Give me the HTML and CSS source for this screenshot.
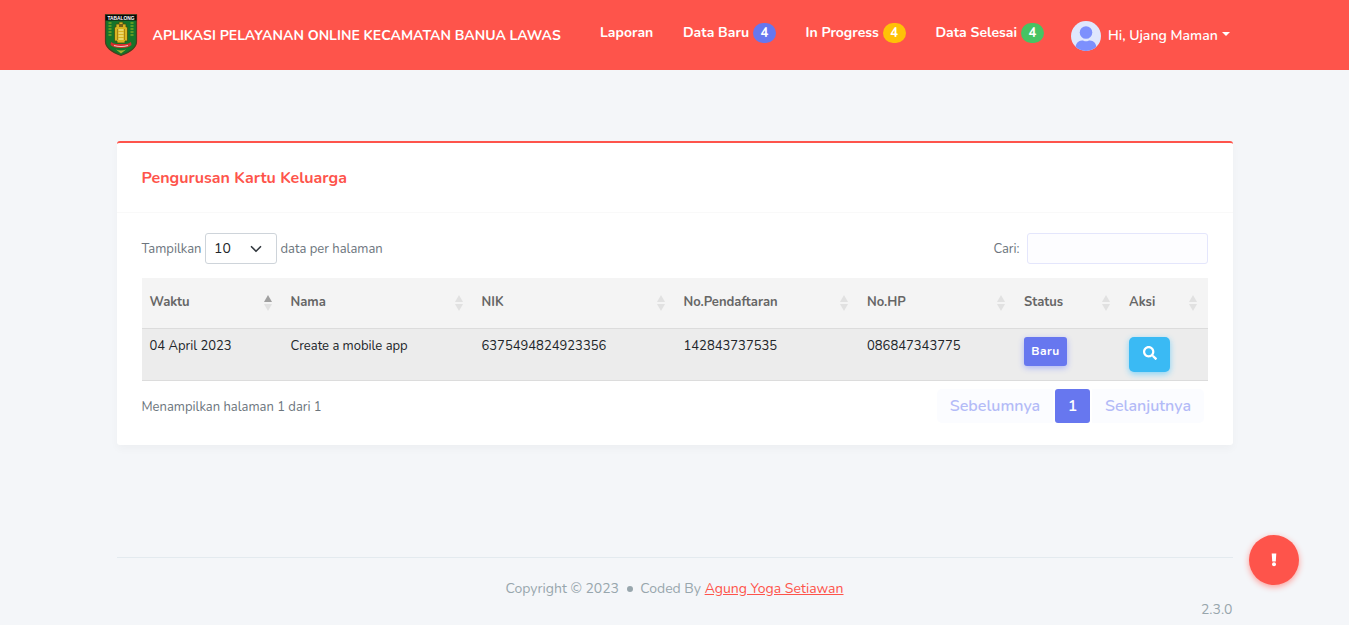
FILE: index.html
```
<!DOCTYPE html>
<html lang="id">
<head>
<meta charset="utf-8">
<title>Pengurusan Kartu Keluarga</title>
<link rel="stylesheet" href="styles.css">
</head>
<body>
<header class="navbar">
  <a class="brand">
    <svg class="crest" width="34" height="44" viewBox="0 0 34 44">
      <path d="M1.500 1.500h31v27c0 6-5 10-15.500 14C6.500 38.500 1.500 34.500 1.500 28.500z" fill="#16742a" stroke="#4a3f1e" stroke-width="1.200"/>
      <path d="M1.500 2h31v5.500h-31z" fill="#080808"/>
      <text class="crest-text" x="17" y="6.600" text-anchor="middle" textLength="27" lengthAdjust="spacingAndGlyphs">TABALONG</text>
      <path d="M6 9v14M28 9v14" stroke="#5f9a25" stroke-width="3" stroke-dasharray="2 1"/>
      <path d="M15 9h4v2h3v3h1.500v14H21v2h-8v-2h-2.500V14H12v-3h3z" fill="#d9b521" stroke="#3f5212" stroke-width=".8"/>
      <path d="M15 11h4v3h-4z" fill="#77601a"/>
      <path d="M13.500 16v11M20.500 16v11" stroke="#a98315" stroke-width="1"/>
      <path d="M14.500 17h5M14.500 20h5M14.500 23h5M14.500 26h5" stroke="#efe282" stroke-width="1.300"/>
      <path d="M7 29q3 2 5 2h10q2 0 5-2l.5 3q-3 3-10.500 3T6.500 32z" fill="#d82d2d"/>
      <path d="M10 32.500q7 2 14 0" stroke="#f1c9bd" stroke-width="1.200" fill="none"/>
      <path d="M12 36.500q5 2 10 0l-5 4z" fill="#a6b331"/>
    </svg>
    <span>APLIKASI PELAYANAN ONLINE KECAMATAN BANUA LAWAS</span>
  </a>
  <nav class="menu">
    <a>Laporan</a>
    <a>Data Baru <span class="badge badge-primary">4</span></a>
    <a>In Progress <span class="badge badge-warning">4</span></a>
    <a>Data Selesai <span class="badge badge-success">4</span></a>
  </nav>
  <a class="user">
    <svg width="30" height="30" viewBox="0 0 30 30">
      <clipPath id="round"><circle cx="15" cy="15" r="15"/></clipPath>
      <g clip-path="url(#round)">
        <path d="M0 0h30v30H0z" fill="#dfe7fd"/>
        <circle cx="15" cy="11.500" r="6.300" fill="#7d90fd"/>
        <path d="M4.500 30v-3c0-4.500 3-7.500 6.500-7.500 1.500 0 2.500.8 4 .8s2.500-.8 4-.8c3.500 0 6.500 3 6.500 7.500v3z" fill="#7d90fd"/>
      </g>
    </svg>
    <span>Hi, Ujang Maman</span>
    <i class="caret"></i>
  </a>
</header>
<main class="card">
  <h4 class="card-header">Pengurusan Kartu Keluarga</h4>
  <div class="card-body">
    <div class="controls">
      <div class="length"><span class="label">Tampilkan</span>
        <span class="select">10
          <svg width="12" height="12" viewBox="0 0 16 16"><path d="M2 5l6 6 6-6" fill="none" stroke="#343a40" stroke-width="2.200" stroke-linecap="round" stroke-linejoin="round"/></svg>
        </span>
        <span class="label">data per halaman</span></div>
      <label class="search"><span class="label">Cari:</span> <input type="text"></label>
    </div>
    <table>
      <colgroup><col class="c1"><col class="c2"><col class="c3"><col class="c4"><col class="c5"><col class="c6"><col class="c7"></colgroup>
      <thead>
        <tr>
          <th><div>Waktu<i class="sort asc"></i></div></th>
          <th><div>Nama<i class="sort"></i></div></th>
          <th><div>NIK<i class="sort"></i></div></th>
          <th><div>No.Pendaftaran<i class="sort"></i></div></th>
          <th><div>No.HP<i class="sort"></i></div></th>
          <th><div>Status<i class="sort"></i></div></th>
          <th><div>Aksi<i class="sort"></i></div></th>
        </tr>
      </thead>
      <tbody>
        <tr>
          <td>04 April 2023</td>
          <td>Create a mobile app</td>
          <td>6375494824923356</td>
          <td>142843737535</td>
          <td>086847343775</td>
          <td><a class="btn-status">Baru</a></td>
          <td><a class="btn-view"><svg width="14" height="14" viewBox="0 0 512 512"><path fill="#fff" d="M505 442.700L405.300 343c-4.500-4.500-10.600-7-17-7H372c27.600-35.300 44-79.700 44-128C416 93.100 322.900 0 208 0S0 93.100 0 208s93.100 208 208 208c48.300 0 92.700-16.400 128-44v16.300c0 6.400 2.500 12.500 7 17l99.700 99.700c9.400 9.400 24.600 9.400 33.900 0l28.300-28.300c9.400-9.400 9.400-24.600.1-34zM208 336c-70.700 0-128-57.200-128-128 0-70.700 57.200-128 128-128 70.700 0 128 57.200 128 128 0 70.700-57.200 128-128 128z"/></svg></a></td>
        </tr>
      </tbody>
    </table>
    <div class="table-foot">
      <span class="info">Menampilkan halaman 1 dari 1</span>
      <div class="pagination"><a class="prev">Sebelumnya</a><a class="current">1</a><a class="next">Selanjutnya</a></div>
    </div>
  </div>
</main>
<footer class="footer">
  <div class="copyright">Copyright © 2023 <i class="bullet"></i> Coded By <a>Agung Yoga Setiawan</a></div>
  <div class="version">2.3.0</div>
</footer>
<a class="fab"><svg width="6" height="14" viewBox="0 0 6 14"><path d="M.7.500h4.600L4.800 8.500H1.200z" fill="#fff"/><circle cx="3" cy="11.300" r="2" fill="#fff"/></svg></a>
</body>
</html>
```
FILE: styles.css
```
* { box-sizing: border-box; }
body {
  margin: 0;
  height: 625px;
  overflow: hidden;
  background: #f4f6f9;
  color: #6c757d;
  font: 14px/21px Nunito, Lato, sans-serif;
}
.navbar {
  display: flex;
  align-items: center;
  height: 70px;
  padding-left: 104px;
  background: #fe544b;
  color: #fff;
  white-space: nowrap;
}
.brand { display: flex; align-items: center; width: 496px; font-weight: 700; }
.crest { margin-right: 14.500px; flex: none; }
.crest-text { font: 700 5px "Liberation Sans", sans-serif; fill: #fff; }
.menu { display: flex; gap: 29.700px; width: 471px; padding-bottom: 5px; font-weight: 700; }
.badge {
  display: inline-block;
  height: 20px;
  padding: 4px 0;
  width: 23px;
  text-align: center;
  border-radius: 10px;
  font-size: 13px;
  line-height: 12px;
  vertical-align: middle;
}
.badge-primary { background: #6777ef; }
.badge-warning { background: #ffc107; }
.badge-success { background: #47c363; }
.user { display: flex; align-items: center; font-weight: 600; }
.user svg { margin-top: 2px; }
.user span { margin: 0 4px 0 7px; }
.caret { border: 4px solid transparent; border-top-color: #fff; border-bottom: 0; margin-top: -3px; }

.card {
  width: 1116px;
  height: 304px;
  margin: 71px 0 0 117px;
  border-top: 2px solid #fe544b;
  border-radius: 3px;
  background: #fff;
  box-shadow: 0 4px 8px rgba(0, 0, 0, .03);
}
.card-header {
  height: 70px;
  margin: 0;
  padding: 21px 24.500px;
  border-bottom: 1px solid #f9f9f9;
  color: #fe544b;
  font-size: 16px;
  line-height: 28px;
  font-weight: 700;
}
.card-body { padding: 20px 25px 20px 24.500px; }
.controls { display: flex; justify-content: space-between; height: 45px; font-size: 13px; }
.length, .search { display: flex; align-items: center; height: 31px; white-space: nowrap; }
.label { padding-top: 2px; }
.select {
  display: flex;
  align-items: center;
  justify-content: space-between;
  width: 72px;
  height: 31px;
  margin: 0 3.500px;
  padding: 0 14px 0 8px;
  border: 1px solid #ced4da;
  border-radius: 3px;
  color: #212529;
  font-size: 14px;
}
.search input {
  width: 181px;
  height: 31px;
  margin-left: 7.500px;
  border: 1px solid #e4e6fc;
  border-radius: 3px;
  background: #fdfdff;
}
table { width: 1066.500px; table-layout: fixed; border-collapse: separate; border-spacing: 0; font-size: 13px; }
.c1 { width: 141px; }
.c2 { width: 191px; }
.c3 { width: 202px; }
.c4 { width: 183.500px; }
.c5 { width: 157px; }
.c6 { width: 105px; }
.c7 { width: 87px; }
th, td { padding: 0 8px; text-align: left; }
th { height: 51px; background: #f4f4f4; color: #666; font-weight: 700; border-bottom: 1px solid #dcdcdc; }
th div { display: flex; justify-content: space-between; align-items: center; margin-top: -2px; }
.sort { display: flex; flex-direction: column; gap: 2px; margin: 2px 3px 0 0; }
.sort::before, .sort::after { content: ""; border: 4px solid transparent; }
.sort::before { border-top: 0; border-bottom: 7px solid #e1e1e1; }
.sort::after { border-bottom: 0; border-top: 7px solid #e1e1e1; }
.sort.asc::before { border-bottom-color: #a0a0a0; }
td { height: 52px; padding-top: 7px; background: #ececec; border-bottom: 1px solid #dcdcdc; color: #212529; vertical-align: top; }
.btn-status, .btn-view { display: flex; align-items: center; justify-content: center; color: #fff; margin-top: 1px; }
.btn-status {
  width: 43px;
  height: 29px;
  border-radius: 3px;
  background: #6777ef;
  box-shadow: 0 2px 6px #acb5f6;
  font-size: 12px;
  font-weight: 700;
  letter-spacing: .5px;
}
.btn-view { width: 41px; height: 35px; padding-bottom: 3px; border-radius: 5px; background: #3abaf4; box-shadow: 0 2px 6px #82d3f8; }
.table-foot { display: flex; justify-content: space-between; padding: 8px 4px 0 0; }
.info { padding-top: 8px; font-size: 13px; line-height: 20px; }
.pagination { display: flex; gap: 2px; font-size: 16px; font-weight: 600; line-height: 34px; text-align: center; }
.prev, .next { background: #fbfcff; color: #b3bbf7; }
.prev { width: 116px; border-radius: 5px 0 0 5px; }
.next { width: 112px; border-radius: 0 5px 5px 0; }
.current { width: 35px; border-radius: 3px; background: #6777ef; color: #fff; }

.footer { width: 1116px; margin: 112px 0 0 117px; border-top: 1px solid #e3eaef; color: #98a6ad; }
.copyright { display: flex; align-items: center; justify-content: center; padding: 20px 1px 0 0; white-space: pre; }
.copyright a { color: #fe544b; text-decoration: underline; }
.bullet { width: 6px; height: 6px; margin: 1px 4px 0; border-radius: 50%; background: #98a6ad; }
.version { padding-right: .5px; text-align: right; }
.fab {
  position: absolute;
  left: 1249px;
  top: 535px;
  display: flex;
  align-items: center;
  justify-content: center;
  width: 50px;
  height: 50px;
  border-radius: 50%;
  background: #fe544b;
  box-shadow: 0 2px 6px #fd9b96;
}
```
